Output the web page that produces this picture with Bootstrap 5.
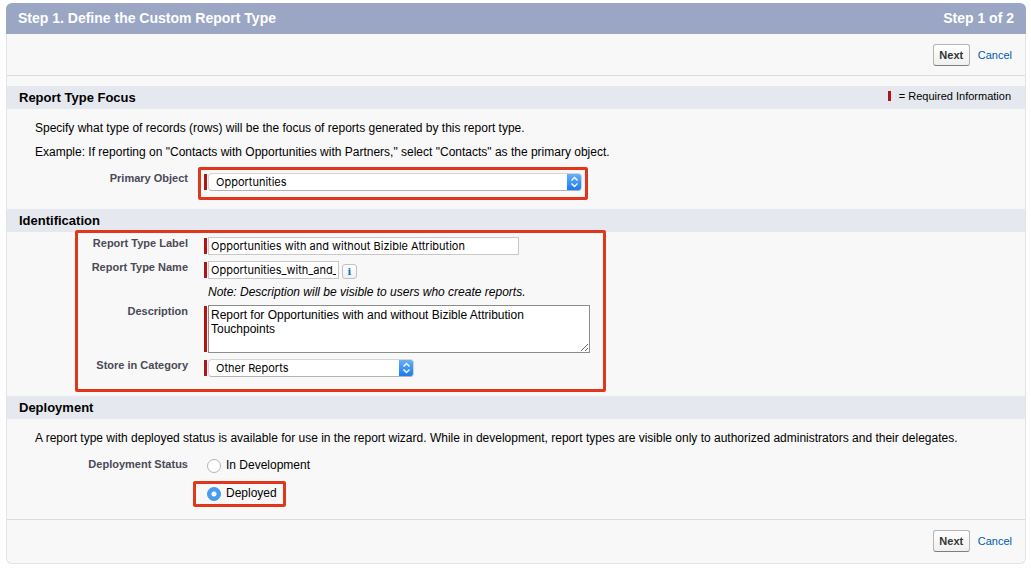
<!DOCTYPE html>
<html lang="en">
<head>
<meta charset="utf-8">
<meta name="viewport" content="width=device-width, initial-scale=1">
<title>Define the Custom Report Type</title>
<link href="https://cdn.jsdelivr.net/npm/bootstrap@5.3.0/dist/css/bootstrap.min.css" rel="stylesheet">
<style>
  body { font-family: "Liberation Sans", Arial, sans-serif; font-size: 12px; line-height: 24px; color: #000; background: #fff; }
  .wizard { margin: 3px 5px 7px 6px; background: #f8f8f8; border: 1px solid #e4e4e6; border-top: 0; border-radius: 6px; }
  .wizard-head { margin: 0 -1px; padding: 0 12px; background: #9aa6c4; color: #fff; border-radius: 6px 6px 0 0; font-size: 14px; font-weight: 700; line-height: 31px; }
  .wizard-head h1 { font-size: 14px; line-height: 31px; font-weight: 700; }
  .actions { padding: 10px 13px; gap: 8px; }
  .actions-top { border-bottom: 1px solid #dbdbdb; margin-bottom: 10px; padding-bottom: 9px; }
  .actions-bottom { border-top: 1px solid #dbdbdb; margin-top: 12px; padding-bottom: 11px; }
  .actions a { font-size: 11px; line-height: 22px; color: #015ba7; text-decoration: none; }
  .btn-step { width: 37px; height: 22px; padding: 0; border: 1px solid #b5b5b5; border-bottom-color: #7f7f7f; border-radius: 3px; background: linear-gradient(#fff, #f0f0f0); color: #333; font-size: 11px; font-weight: 700; line-height: 20px; }
  .band { padding: 0 14px 0 12px; background: #e5e8ef; }
  .band h2 { font-size: 13px; font-weight: 700; line-height: 23px; }
  .legend-note { font-size: 11px; line-height: 21px; }
  .legend-note::before { content: ""; display: inline-block; width: 3px; height: 10px; margin-right: 8px; background: #b01414; vertical-align: -1px; }
  .prose { padding: 7px 28px 0; }
  .field-label { flex: none; width: 181px; text-align: right; font-size: 11px; font-weight: 700; line-height: 12px; color: #4a4a56; }
  .field-top { padding-top: 5px; }
  .marked { border: 3px solid #e0371c; border-radius: 2px; }
  .req { display: flex; gap: 1px; }
  .req::before { content: ""; width: 3px; margin: 1px 0; background: #b01414; }
  .ctl { font-family: Inter, sans-serif; font-size: 11px; line-height: 16px; height: 18px; color: #000; background-color: #fff; border: 1px solid #c8c8c8; border-radius: 0; padding: 0 2px; max-width: 100%; }
  .pick { appearance: none; border-radius: 4px; border-color: #d4d4d4; border-bottom-color: #b4b4b4; padding: 0 20px 0 7px; background: #fff url("data:image/svg+xml,%3Csvg xmlns='http://www.w3.org/2000/svg' width='15' height='18'%3E%3Cdefs%3E%3ClinearGradient id='g' x2='0' y2='1'%3E%3Cstop stop-color='%236db3f8'/%3E%3Cstop offset='1' stop-color='%231478f0'/%3E%3C/linearGradient%3E%3C/defs%3E%3Cpath d='M0 0h11a4 4 0 0 1 4 4v10a4 4 0 0 1-4 4H0z' fill='url(%23g)'/%3E%3Cpath d='M4.500 7.500l3-3 3 3M4.500 10.500l3 3 3-3' fill='none' stroke='%23fff' stroke-width='1.400'/%3E%3C/svg%3E") right center / 15px 18px no-repeat border-box; }
  .w-object { width: 374px; }
  .w-label { width: 311px; }
  .w-name { width: 131px; }
  .w-category { width: 206px; }
  .memo { width: 382px; height: 48px; padding: 2px; font-family: "Liberation Sans", Arial, sans-serif; font-size: 12px; line-height: 14px; border-color: #8c8c8c; resize: both; }
  .focus-row { margin: 3px 0 9px; }
  .focus-mark { margin-left: 10px; padding: 3px 3px 6px; }
  .ident { margin: -2px 20px 4px 68px; width: 531px; max-width: calc(100% - 68px); padding: 4px 0 12px; position: relative; }
  .ident .field-label { width: 110px; margin-right: 16px; }
  .ident-row { margin-bottom: 6px; }
  .note { margin: 0 0 6px 130px; line-height: 14px; }
  .info { width: 15px; height: 15px; margin: 3px 0 0 3px; padding: 0; border: 1px solid #b9c3cc; border-radius: 3px; background: linear-gradient(#fff, #eef2f5); color: #1c6ea8; font: 700 10px/12px "DejaVu Serif", serif; }
  .status-row { margin-top: 3px; }
  .choices { margin-left: 5px; gap: 2px; }
  .choice { padding: 3px 6px 3px 11px; gap: 5px; border: 3px solid transparent; line-height: 12px; }
  .choice.marked { border-color: #e0371c; }
  .choice input { appearance: none; width: 14px; height: 14px; margin: 0; border: 1px solid #b4b4b4; border-radius: 50%; background: #fff; flex: none; }
  .choice input:checked { border-color: #3f97ee; background: radial-gradient(circle, #fff 2px, #469df2 3px); }
</style>
</head>
<body>
<form class="wizard">
  <header class="wizard-head d-flex justify-content-between">
    <h1 class="m-0">Step 1. Define the Custom Report Type</h1>
    <span>Step 1 of 2</span>
  </header>
  <div class="actions actions-top d-flex justify-content-end align-items-center">
    <button type="button" class="btn-step">Next</button>
    <a href="#">Cancel</a>
  </div>

  <section>
    <div class="band d-flex justify-content-between">
      <h2 class="m-0">Report Type Focus</h2>
      <span class="legend-note">= Required Information</span>
    </div>
    <div class="prose">
      <p class="m-0">Specify what type of records (rows) will be the focus of reports generated by this report type.</p>
      <p class="m-0">Example: If reporting on "Contacts with Opportunities with Partners," select "Contacts" as the primary object.</p>
    </div>
    <div class="focus-row d-flex align-items-start">
      <label class="field-label field-top" for="object">Primary Object</label>
      <div class="marked focus-mark">
        <div class="req"><select id="object" class="ctl pick w-object"><option>Opportunities</option></select></div>
      </div>
    </div>
  </section>

  <section>
    <div class="band"><h2 class="m-0">Identification</h2></div>
    <div class="marked ident">
      <div class="ident-row d-flex align-items-start">
        <label class="field-label" for="rlabel">Report Type Label</label>
        <div class="req"><input id="rlabel" type="text" class="ctl w-label" value="Opportunities with and without Bizible Attribution"></div>
      </div>
      <div class="ident-row d-flex align-items-start">
        <label class="field-label" for="rname">Report Type Name</label>
        <div class="req"><input id="rname" type="text" class="ctl w-name" value="Opportunities_with_and_without_Bizible"></div>
        <button type="button" class="info" aria-label="Info">i</button>
      </div>
      <p class="note fst-italic">Note: Description will be visible to users who create reports.</p>
      <div class="ident-row d-flex align-items-start">
        <label class="field-label" for="desc">Description</label>
        <div class="req"><textarea id="desc" class="ctl memo">Report for Opportunities with and without Bizible Attribution Touchpoints</textarea></div>
      </div>
      <div class="d-flex align-items-start">
        <label class="field-label" for="cat">Store in Category</label>
        <div class="req"><select id="cat" class="ctl pick w-category"><option>Other Reports</option></select></div>
      </div>
    </div>
  </section>

  <section>
    <div class="band"><h2 class="m-0">Deployment</h2></div>
    <div class="prose">
      <p class="m-0">A report type with deployed status is available for use in the report wizard. While in development, report types are visible only to authorized administrators and their delegates.</p>
    </div>
    <div class="status-row d-flex align-items-start" role="radiogroup" aria-labelledby="status">
      <span class="field-label field-top" id="status">Deployment Status</span>
      <div class="choices d-flex flex-column align-items-start">
        <label class="choice d-flex"><input type="radio" name="status">In Development</label>
        <label class="choice marked d-flex"><input type="radio" name="status" checked>Deployed</label>
      </div>
    </div>
  </section>

  <div class="actions actions-bottom d-flex justify-content-end align-items-center">
    <button type="button" class="btn-step">Next</button>
    <a href="#">Cancel</a>
  </div>
</form>
<script src="https://cdn.jsdelivr.net/npm/bootstrap@5.3.0/dist/js/bootstrap.bundle.min.js"></script>
</body>
</html>
